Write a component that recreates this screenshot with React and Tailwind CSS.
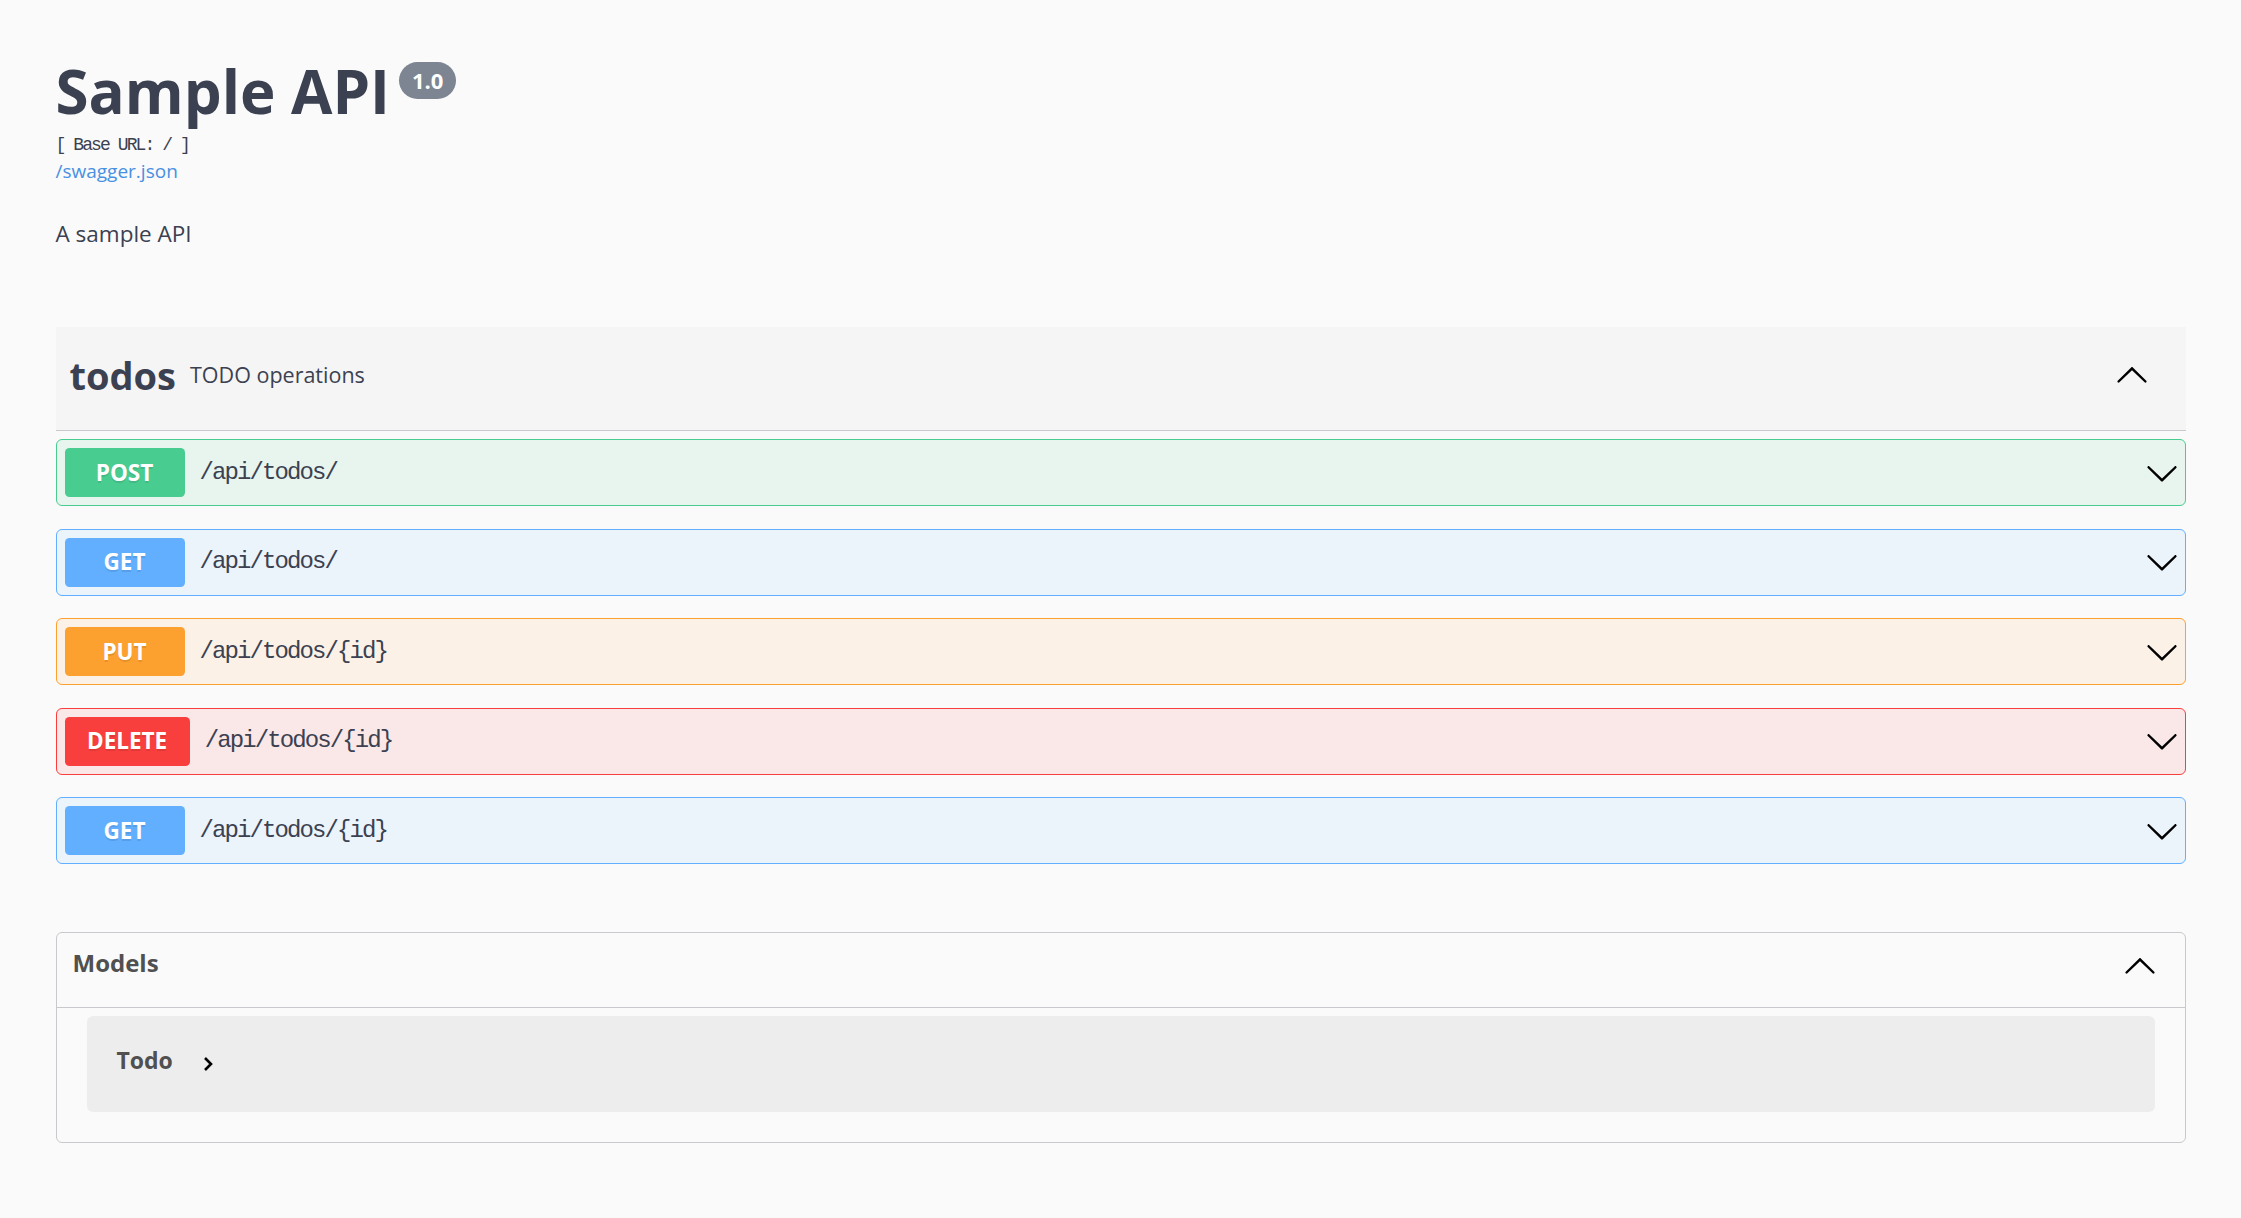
import React from "react";

const ArrowDown = ({ className = "" }) => (
  <svg viewBox="0 0 20 20" width="34" height="34" className={className} fill="#000">
    <path d="M17.418 6.109c.272-.268.709-.268.979 0s.271.701 0 .969l-7.908 7.83c-.27.268-.707.268-.979 0l-7.908-7.83c-.27-.268-.27-.701 0-.969.271-.268.709-.268.979 0L10 13.25l7.418-7.141z" />
  </svg>
);

const ArrowUp = ({ className = "" }) => (
  <svg viewBox="0 0 20 20" width="34" height="34" className={className} fill="#000">
    <path d="M17.418 14.908c.272.268.709.268.979 0s.271-.701 0-.969l-7.908-7.83c-.27-.268-.707-.268-.979 0l-7.908 7.83c-.27.268-.27.701 0 .969.271.268.709.268.979 0L10 7.767l7.418 7.141z" />
  </svg>
);

const ops = [
  { m: "POST", path: "/api/todos/", color: "border-[#49cc90] bg-[#e8f5ef]", badge: "bg-[#49cc90]" },
  { m: "GET", path: "/api/todos/", color: "border-[#61affe] bg-[#ebf3fb]", badge: "bg-[#61affe]" },
  { m: "PUT", path: "/api/todos/{id}", color: "border-[#fca130] bg-[#fbf1e6]", badge: "bg-[#fca130]" },
  { m: "DELETE", path: "/api/todos/{id}", color: "border-[#f93e3e] bg-[#fae7e7]", badge: "bg-[#f93e3e]" },
  { m: "GET", path: "/api/todos/{id}", color: "border-[#61affe] bg-[#ebf3fb]", badge: "bg-[#61affe]" },
];

export default function App() {
  return (
    <div className="min-h-screen bg-[#fafafa] text-[#3b4151] [font-family:'Open_Sans',sans-serif]">
      <div className="mx-auto max-w-[2190px] px-[30px] pb-[60px]">
        {/* Info */}
        <div className="pt-[56px]">
          <div className="flex items-start">
            <h2 className="text-[60px] leading-[70px] font-bold text-[#3b4151]">Sample API</h2>
            <span className="ml-[9px] mt-[6px] flex h-[37px] items-center rounded-full bg-[#7d8492] px-[13px] text-[22px] font-bold text-white">
              1.0
            </span>
          </div>
          <div className="mt-[9px] text-[18px] leading-[20px] tracking-[-1.9px] text-[#3b4151] [font-family:'Liberation_Mono',monospace]">
            [ Base URL: / ]
          </div>
          <div className="mt-[5px] text-[19px] leading-[22px]">
            <a className="text-[#4990e2]" href="#">/swagger.json</a>
          </div>
          <p className="mt-[37px] text-[22.5px] leading-[30px]">A sample API</p>
        </div>

        {/* Tag section */}
        <div className="mt-[78px]">
          <div className="flex h-[104px] items-center justify-between border-b border-[#c8c9cd] bg-[#f5f5f5] pl-[14px] pr-[37px]">
            <div className="mb-[6px] flex items-center gap-[14px]">
              <span className="text-[38px] font-bold text-[#3b4151]">todos</span>
              <span className="text-[21.5px] text-[#3b4151]">TODO operations</span>
            </div>
            <ArrowUp className="mb-[9px]" />
          </div>

          <div className="mt-[8px] flex flex-col gap-[22.5px]">
            {ops.map((o, i) => (
              <div
                key={i}
                className={`flex h-[67px] items-center rounded-[6px] border pl-[8px] pr-[6px] ${o.color}`}
              >
                <span
                  className={`flex h-[49px] min-w-[120px] items-center justify-center rounded-[4.5px] px-[22.5px] text-[22.5px] font-bold text-white [text-shadow:0_1.5px_0_rgba(0,0,0,0.1)] ${o.badge}`}
                >
                  {o.m}
                </span>
                <span className="flex-1 pl-[15px] text-[24px] tracking-[-1.9px] text-[#3b4151] [font-family:'Liberation_Mono',monospace]">
                  {o.path}
                </span>
                <ArrowDown />
              </div>
            ))}
          </div>
        </div>

        {/* Models */}
        <div className="mt-[68px] rounded-[6px] border border-[#c8c9cd]">
          <div className="flex h-[75px] items-center justify-between border-b border-[#c8c9cd] pl-[16px] pr-[28px]">
            <span className="mb-[15px] text-[24px] font-bold text-[#505050]">Models</span>
            <ArrowUp className="mb-[10px]" />
          </div>
          <div className="px-[30px] pb-[30px] pt-[8px]">
            <div className="flex h-[96px] items-center rounded-[6px] bg-[#ededed] pl-[30px]">
              <span className="mb-[8px] text-[23px] font-bold text-[#505050]">Todo</span>
              <svg width="12" height="16" viewBox="0 0 12 16" className="ml-[29px]">
                <polyline points="3,2 9,8 3,14" fill="none" stroke="#000" strokeWidth="2.6" />
              </svg>
            </div>
          </div>
        </div>
      </div>
    </div>
  );
}
